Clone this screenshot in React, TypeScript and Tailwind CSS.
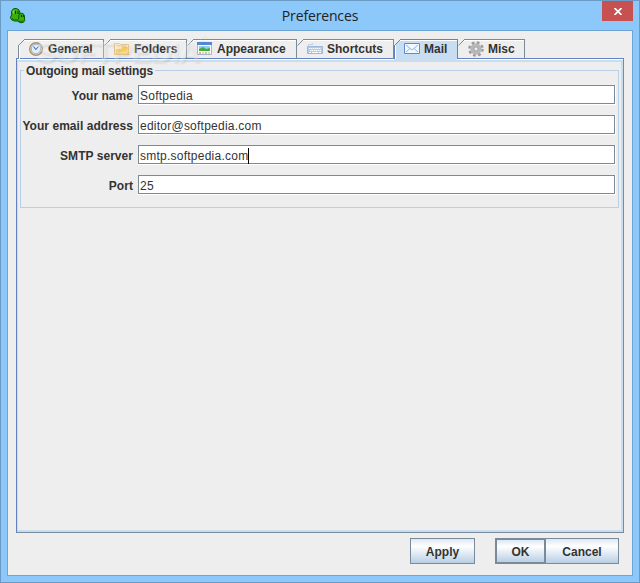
import type { ReactNode } from "react";
import { clsx } from "clsx";

function AppIcon() {
  return (
    <svg width="16" height="16" viewBox="0 0 16 16">
      <path d="M3.5 .7Q6.5 -.2 8.6 1.6Q10.3 3.5 10 7v5Q8 13.6 4.5 13Q1 12.4 .6 10Q.4 8 1.7 7Q.3 3 3.5 .7z" fill="#3cae12" stroke="#0a5a05" />
      <path d="M10.5 5.2Q13.5 4.6 14.4 7.5L14.7 12.5Q14 15 11 14.8Q8.2 14.4 7.8 12.5Q7.6 11 8.8 10.2Q8.2 6.5 10.5 5.2z" fill="#3cae12" stroke="#0a5a05" />
      <path d="M1.5 10.5Q4 13 8 11.5M9 13q2.5 1.5 5 0" fill="none" stroke="#158009" strokeWidth="1.5" />
      <path d="M5.5 3v3M8 3v3M11.5 7v2M13.3 7v2" stroke="#053a02" />
      <path d="M3.5 2.5v3" stroke="#8ddc2c" strokeWidth="1.4" />
    </svg>
  );
}

function ClockIcon() {
  return (
    <svg width="16" height="16" viewBox="0 0 16 16">
      <circle cx="8" cy="8" r="6.3" fill="#f7ecd9" stroke="#b08f66" strokeWidth="1.4" />
      <circle cx="8" cy="8" r="4.8" fill="#e3eefb" stroke="#8eaed6" />
      <path d="M5.5 5.5l2.3 3L10.5 5.5" fill="none" stroke="#4a74aa" strokeWidth="1.1" />
    </svg>
  );
}

function FolderIcon() {
  return (
    <svg width="16" height="16" viewBox="0 0 16 16">
      <path d="M.5 13.5v-11h5l1 1h8v10z" fill="#fdf0c8" stroke="#e5b768" />
      <path d="M1.5 13V8H7l1.500-2H14v7z" fill="#f5cd62" />
      <path d="M2 4.5h3.500M7 5h6" stroke="#f2cd77" />
    </svg>
  );
}

function AppearanceIcon() {
  return (
    <svg width="16" height="16" viewBox="0 0 16 16">
      <path d="M.5 1.5h14v12H.5z" fill="#fff" stroke="#a3b4cb" />
      <path d="M0 1h15v3H0z" fill="#5687d2" />
      <path d="M2 5h11v5H2z" fill="#8fd0f5" />
      <path d="M2 10V8l4-2 3 2 4-1v3z" fill="#3fae3c" />
      <path d="M2 12h2" stroke="#dc4a42" />
      <path d="M5 12h2M11 12h2" stroke="#e4a33d" />
      <path d="M8 12h2" stroke="#4daa45" />
    </svg>
  );
}

function KeyboardIcon() {
  return (
    <svg width="16" height="16" viewBox="0 0 16 16">
      <path d="M1.5 5V3.5h4V2" fill="none" stroke="#c3cfdf" />
      <path d="M.5 5.5h15v7H.5z" fill="#b3cbea" stroke="#9db8dc" />
      <path d="M2 7.5h12M3 9.5h11" stroke="#fff" strokeDasharray="1.4 .6" />
      <path d="M2 11.5h2M5 11.5h6M12 11.5h2" stroke="#fff" />
    </svg>
  );
}

function MailIcon() {
  return (
    <svg width="16" height="16" viewBox="0 0 16 16">
      <path d="M.5 2.5h15v10H.5z" fill="#f1f8ff" stroke="#5a8dd0" />
      <path d="M2 4l6 5 6-5M2 11l4-3.5M14 11l-4-3.5" fill="none" stroke="#8db6e5" />
    </svg>
  );
}

function GearIcon() {
  return (
    <svg width="16" height="16" viewBox="0 0 16 16">
      <circle cx="8" cy="8" r="6.5" fill="none" stroke="#9a9a9a" strokeWidth="2.6" strokeDasharray="2.7 2.405" />
      <circle cx="8" cy="8" r="4.1" fill="#d0d0d0" stroke="#b8b8b8" strokeWidth="3.4" />
      <circle cx="8" cy="8" r="2.1" fill="#eee" stroke="#8f8f8f" strokeWidth=".8" />
    </svg>
  );
}

type TabProps = { icon: ReactNode; label: string; className: string; active?: boolean; first?: boolean };

function Tab({ icon, label, className, active, first }: TabProps) {
  return (
    <button className={clsx("relative flex h-5 shrink-0 items-center", className)}>
      {active && (
        <svg className="absolute inset-0 h-full w-full overflow-visible" fill="none">
          <path d="M0 22V7L7 1h56v21z" fill="#c8ddf2" />
        </svg>
      )}
      <span className={clsx("absolute top-0 right-0 bottom-0 left-1.5 border-t border-r", active ? "border-[#6382bf]" : "border-[#7a8a99]")} />
      <span className="absolute top-px right-px left-1.5 border-t border-white" />
      {(first || active) && <span className={clsx("absolute top-1.5 bottom-0 left-0 border-l", active ? "border-[#6382bf]" : "border-[#7a8a99]")} />}
      {(first || active) && <span className="absolute top-1.5 bottom-0 left-px border-l border-white" />}
      <svg className="absolute top-0 left-0" width="7" height="7">
        <path d="M.5 6.5l6-6" stroke={active ? "#6382bf" : "#7a8a99"} />
      </svg>
      <span className="relative flex items-center gap-1 pl-2.5">
        {icon}
        <span>{label}</span>
      </span>
    </button>
  );
}

function Field({ label, value, focused }: { label: string; value: string; focused?: boolean }) {
  return (
    <div className="flex h-5 items-center">
      <label className="w-[112px] pt-0.5 text-right tracking-[0.04px] whitespace-nowrap">{label}</label>
      <div className="ml-[5px] h-5 flex-1 border-r border-b border-white">
        <div className="flex h-[19px] items-center border border-[#7a8a99] bg-white pt-0.5 pl-px font-normal">
          <span className="tracking-[0.24px]">{value}</span>
          {focused && <span className="h-4 w-px bg-black" />}
        </div>
      </div>
    </div>
  );
}

const buttonClass =
  "flex h-[26px] items-center justify-center border border-[#7a8a99] bg-linear-to-b from-[#dde8f3] via-white via-30% to-[#b8cfe5] pt-0.5";

export default function App() {
  return (
    <div className="relative flex h-[583px] w-[640px] flex-col overflow-hidden border border-[#6b9ac5] bg-[#8dc8fb] px-1.5 pb-1.5 font-['Liberation_Sans',Arial,sans-serif] text-[12px] leading-4 font-bold text-[#333]">
      <header className="relative flex h-[29px] shrink-0 items-center justify-center">
        <span className="absolute top-[7px] left-[3px]">
          <AppIcon />
        </span>
        <h1 className="font-['Open_Sans',sans-serif] text-[14px] font-normal tracking-[-0.15px] text-[#222]">Preferences</h1>
        <button className="absolute top-0 right-0 flex h-5 w-[31px] items-center justify-center bg-[#c75050]">
          <svg width="8" height="7" viewBox="0 0 8 7">
            <path d="M.5 0l7 7M7.5 0l-7 7" stroke="#fff" strokeWidth="1.7" />
          </svg>
        </button>
      </header>

      <main className="flex flex-1 flex-col border border-[#6fa5d4] bg-[#eee] px-2 pt-2">
        <div className="relative z-10 -mb-px flex pl-0.5">
          <Tab first icon={<ClockIcon />} label="General" className="w-[86px]" />
          <Tab icon={<FolderIcon />} label="Folders" className="w-[83px]" />
          <Tab icon={<AppearanceIcon />} label="Appearance" className="w-[110px]" />
          <Tab icon={<KeyboardIcon />} label="Shortcuts" className="w-[97px]" />
          <Tab active icon={<MailIcon />} label="Mail" className="w-[64px]" />
          <Tab icon={<GearIcon />} label="Misc" className="w-[67px]" />
        </div>

        <section className="h-[475px] border border-t-[#6382bf] border-r-[#7a8a99] border-b-[#7a8a99] border-l-[#6382bf]">
          <div className="h-full border-t border-white">
            <div className="h-full border-t-2 border-r-2 border-b-2 border-l border-[#c8ddf2] pt-2 pr-0.5 pl-0.5">
              <fieldset className="relative h-[138px] border border-[#b8cfe5] pt-[14px] pr-0.5">
                <span className="absolute -top-2 left-[3px] bg-[#eee] px-0.5 tracking-[-0.14px]">Outgoing mail settings</span>
                <div className="flex flex-col gap-2.5">
                  <Field label="Your name" value="Softpedia" />
                  <Field label="Your email address" value="editor@softpedia.com" />
                  <Field label="SMTP server" value="smtp.softpedia.com" focused />
                  <Field label="Port" value="25" />
                </div>
              </fieldset>
            </div>
          </div>
        </section>

        <footer className="flex justify-end pt-[5px] pr-[5px]">
          <button className={clsx(buttonClass, "mr-5 w-[65px]")}>Apply</button>
          <button className={clsx(buttonClass, "w-[51px] border-2")}>OK</button>
          <button className={clsx(buttonClass, "w-[73px] border-l-0")}>Cancel</button>
        </footer>
      </main>

      <div className="pointer-events-none absolute top-[36px] left-[35px] z-20 flex text-[30px] leading-[30px] tracking-[-0.9px] text-white/30 [text-shadow:1px_2px_2px_rgba(0,0,0,0.07)]">
        SOFTPEDIA
        <span className="-mt-2 text-[9px] leading-[18px] font-normal tracking-normal">®</span>
      </div>
    </div>
  );
}
